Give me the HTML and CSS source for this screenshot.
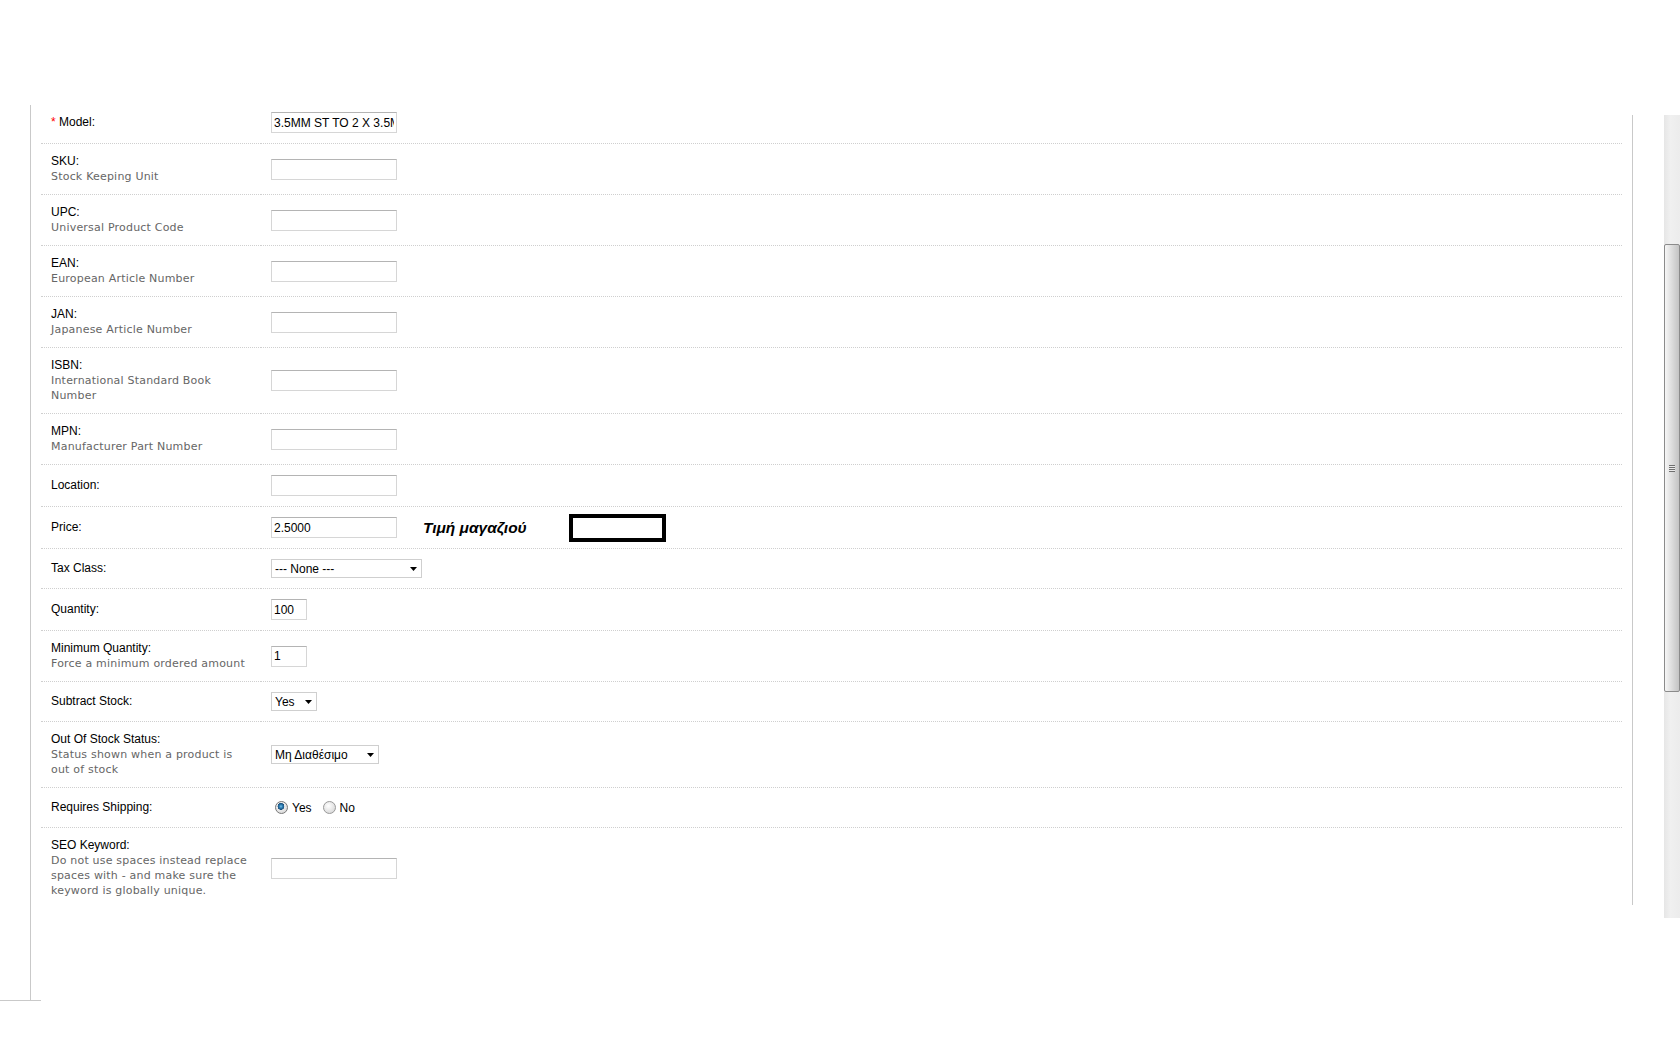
FILE: index.html
```html
<!DOCTYPE html>
<html lang="en">
<head>
    <meta charset="UTF-8">
    <title>Product Form - Data</title>
    <link rel="stylesheet" href="styles.css">
</head>
<body>
    <div class="page">
        <div class="panel">
            <table class="form">
                <tr class="first">
                    <td><span class="required">*</span> Model:</td>
                    <td><input type="text" class="text-field" value="3.5MM ST TO 2 X 3.5MM"></td>
                </tr>
                <tr>
                    <td>SKU:<span class="help">Stock Keeping Unit</span></td>
                    <td><input type="text" class="text-field"></td>
                </tr>
                <tr>
                    <td>UPC:<span class="help">Universal Product Code</span></td>
                    <td><input type="text" class="text-field"></td>
                </tr>
                <tr>
                    <td>EAN:<span class="help">European Article Number</span></td>
                    <td><input type="text" class="text-field"></td>
                </tr>
                <tr>
                    <td>JAN:<span class="help">Japanese Article Number</span></td>
                    <td><input type="text" class="text-field"></td>
                </tr>
                <tr>
                    <td>ISBN:<span class="help">International Standard Book Number</span></td>
                    <td><input type="text" class="text-field"></td>
                </tr>
                <tr>
                    <td>MPN:<span class="help">Manufacturer Part Number</span></td>
                    <td><input type="text" class="text-field"></td>
                </tr>
                <tr>
                    <td>Location:</td>
                    <td><input type="text" class="text-field"></td>
                </tr>
                <tr>
                    <td>Price:</td>
                    <td>
                        <div class="price-cell">
                            <input type="text" class="text-field" value="2.5000">
                            <span class="shop-price">Τιμή μαγαζιού</span>
                            <span class="shop-box"></span>
                        </div>
                    </td>
                </tr>
                <tr>
                    <td>Tax Class:</td>
                    <td>
                        <span class="select select-tax">
                            <select><option>--- None ---</option></select>
                            <svg class="caret" width="7" height="4" viewBox="0 0 7 4"><path d="M0 0h7L3.5 4z" fill="#000"/></svg>
                        </span>
                    </td>
                </tr>
                <tr>
                    <td>Quantity:</td>
                    <td><input type="text" class="text-field small" value="100"></td>
                </tr>
                <tr>
                    <td>Minimum Quantity:<span class="help">Force a minimum ordered amount</span></td>
                    <td><input type="text" class="text-field small" value="1"></td>
                </tr>
                <tr>
                    <td>Subtract Stock:</td>
                    <td>
                        <span class="select select-yes">
                            <select><option>Yes</option><option>No</option></select>
                            <svg class="caret" width="7" height="4" viewBox="0 0 7 4"><path d="M0 0h7L3.5 4z" fill="#000"/></svg>
                        </span>
                    </td>
                </tr>
                <tr>
                    <td>Out Of Stock Status:<span class="help">Status shown when a product is out of stock</span></td>
                    <td>
                        <span class="select select-status">
                            <select><option>Μη Διαθέσιμο</option></select>
                            <svg class="caret" width="7" height="4" viewBox="0 0 7 4"><path d="M0 0h7L3.5 4z" fill="#000"/></svg>
                        </span>
                    </td>
                </tr>
                <tr>
                    <td>Requires Shipping:</td>
                    <td>
                        <div class="radio-group">
                            <label><input type="radio" name="shipping" checked> Yes</label>
                            <label><input type="radio" name="shipping"> No</label>
                        </div>
                    </td>
                </tr>
                <tr class="last">
                    <td>SEO Keyword:<span class="help">Do not use spaces instead replace spaces with - and make sure the keyword is globally unique.</span></td>
                    <td><input type="text" class="text-field"></td>
                </tr>
            </table>
        </div>
        <div class="panel-foot"></div>
    </div>

    <!-- inner frame edge + its scrollbar -->
    <div class="frame-edge"></div>
    <div class="scrollbar">
        <div class="thumb"><span class="grip"></span></div>
    </div>
</body>
</html>
```

FILE: styles.css
```css
/* General */
body {
    margin: 0;
    background: #fff;
    font-family: "Liberation Sans", Arial, sans-serif;
    font-size: 12px;
    color: #000;
}

.page {
    padding-top: 105px;
}

/* Content panel */
.panel {
    margin-left: 30px;
    height: 895px;
    border-left: 1px solid #c9c9c9;
    padding-left: 10px;
}

.panel-foot {
    width: 41px;
    border-top: 1px solid #c9c9c9;
}

/* Form table */
.form {
    width: 1581px;
    border-collapse: collapse;
}

.form td {
    padding: 10px;
    line-height: 15px;
    vertical-align: middle;
    border-bottom: 1px dotted #cfcfcf;
}

.form td:first-child {
    width: 200px;
}

.form tr.first td {
    padding-top: 7px;
}

.form tr.last td {
    border-bottom: none;
}

.required {
    color: #f00;
}

.help {
    display: block;
    color: #666;
    font-family: "DejaVu Sans", Verdana, sans-serif;
    font-size: 11px;
    line-height: 15px;
    letter-spacing: 0.2px;
}

/* Inputs */
.text-field {
    box-sizing: border-box;
    width: 126px;
    height: 21px;
    margin: 0;
    padding: 0 2px;
    border: 1px solid #d6d6d6;
    border-top-color: #b4b4b4;
    font-family: "Liberation Sans", Arial, sans-serif;
    font-size: 12px;
    color: #000;
    vertical-align: middle;
}

.text-field.small {
    width: 36px;
}

/* Price extras */
.price-cell {
    display: flex;
    align-items: center;
}

.shop-price {
    margin-left: 26px;
    font-size: 15.5px;
    font-weight: bold;
    font-style: italic;
}

.shop-box {
    box-sizing: border-box;
    width: 97px;
    height: 28px;
    margin: -4px 0 -4px 42px;
    border: 4px solid #000;
    background: #fff;
}

/* Selects */
.select {
    position: relative;
    display: inline-block;
    vertical-align: middle;
}

.select select {
    -webkit-appearance: none;
    appearance: none;
    box-sizing: border-box;
    height: 19px;
    margin: 0;
    padding: 0 14px 0 3px;
    border: 1px solid #cfcfcf;
    border-radius: 0;
    background: #fff;
    font-family: "Liberation Sans", Arial, sans-serif;
    font-size: 12px;
    color: #000;
    display: block;
}

.select-tax select { width: 151px; }
.select-yes select { width: 46px; }
.select-status select { width: 108px; }

.select .caret {
    position: absolute;
    right: 5px;
    top: 8px;
    pointer-events: none;
}

/* Radios */
.radio-group {
    display: flex;
    align-items: center;
    height: 19px;
}

.radio-group label {
    display: flex;
    align-items: center;
    margin-right: 7px;
    padding-top: 2px;
}

.radio-group input {
    -webkit-appearance: none;
    appearance: none;
    width: 13px;
    height: 13px;
    margin: -2px 4px 0 4px;
    border: 1px solid #9a9a9a;
    border-radius: 50%;
    background: radial-gradient(circle at 40% 35%, #fff 0, #e9e9e9 45%, #cfcfcf 100%);
    box-sizing: border-box;
}

.radio-group input:checked {
    background:
        radial-gradient(circle at 45% 40%, #7fc2ea 0, #2d7fb4 1.6px, #1b4f7c 3.2px, transparent 3.6px),
        radial-gradient(circle at 40% 35%, #fff 0, #e9e9e9 45%, #cfcfcf 100%);
    border-color: #7a7a7a;
}

/* Frame edge and scrollbar */
.frame-edge {
    position: absolute;
    left: 1632px;
    top: 115px;
    width: 1px;
    height: 790px;
    background: #c9c9c9;
}

.scrollbar {
    position: absolute;
    left: 1664px;
    top: 115px;
    width: 16px;
    height: 803px;
    background: linear-gradient(to right, #e6e6e6, #f0f0f0 40%, #ececec);
}

.thumb {
    position: absolute;
    left: 0;
    right: 0;
    top: 129px;
    height: 448px;
    box-sizing: border-box;
    border: 1px solid #8b8b8b;
    border-radius: 2px;
    background: linear-gradient(to right, #f6f6f6, #e4e4e4 35%, #d2d2d2 70%, #c4c4c4);
}

.grip {
    position: absolute;
    left: 4px;
    top: 220px;
    width: 6px;
    height: 7px;
    background: repeating-linear-gradient(to bottom, #6f6f6f 0 1px, #eaeaea 1px 2px);
}
```
